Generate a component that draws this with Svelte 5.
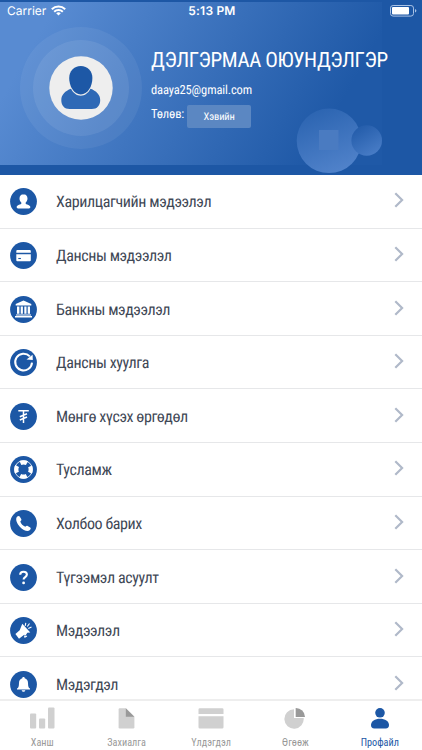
<script>
const rows = [
	{ icon: "user", label: "Харилцагчийн мэдээлэл" },
	{ icon: "card", label: "Дансны мэдээлэл" },
	{ icon: "bank", label: "Банкны мэдээлэл" },
	{ icon: "refresh", label: "Дансны хуулга" },
	{ icon: "tugrik", label: "Мөнгө хүсэх өргөдөл" },
	{ icon: "help", label: "Тусламж" },
	{ icon: "phone", label: "Холбоо барих" },
	{ icon: "question", label: "Түгээмэл асуулт" },
	{ icon: "news", label: "Мэдээлэл" },
	{ icon: "bell", label: "Мэдэгдэл" },
];

const tabs = [
	{ icon: "bars", label: "Ханш" },
	{ icon: "file", label: "Захиалга" },
	{ icon: "wallet", label: "Үлдэгдэл" },
	{ icon: "pie", label: "Өгөөж" },
	{ icon: "profile", label: "Профайл" },
];

let active = $state("profile");
</script>

<div class="screen">
	<header>
		<div class="panel"></div>
		<svg class="bubbles" viewBox="0 0 90 70" width="90" height="70">
			<defs>
				<linearGradient id="big" x1="0.2" y1="0" x2="0.6" y2="1">
					<stop offset="0" stop-color="#2a63b0" />
					<stop offset="1" stop-color="#5082ca" />
				</linearGradient>
				<linearGradient id="small" x1="0.2" y1="0" x2="0.8" y2="1">
					<stop offset="0" stop-color="#225ba9" />
					<stop offset="1" stop-color="#4a7ec8" />
				</linearGradient>
			</defs>
			<circle cx="33" cy="35.8" r="32.3" fill="url(#big)" />
			<rect x="23" y="25" width="19.500" height="20" fill="#4a7bc1" />
			<circle cx="70.700" cy="35.500" r="15.300" fill="url(#small)" />
		</svg>

		<div class="status">
			<div class="carrier">
				<span>Carrier</span>
				<svg width="15" height="11" viewBox="0 0 15 11" fill="none" stroke="#fff" stroke-width="2">
					<path d="M.8 4.2a9.6 9.6 0 0 1 13.4 0M3.2 6.7a6.2 6.2 0 0 1 8.6 0" />
					<path d="M7.5 10.6 5.2 8.3a3.3 3.3 0 0 1 4.6 0z" fill="#fff" stroke="none" />
				</svg>
			</div>
			<span class="clock">5:13 PM</span>
			<svg class="battery" width="27" height="12" viewBox="0 0 27 12">
				<rect x=".5" y=".5" width="23" height="10.6" rx="2.6" fill="none" stroke="#a9c2e5" />
				<rect x="2" y="2" width="17" height="7.6" rx="1" fill="#fff" />
				<path d="M25 4v3.6q1.4-.5 1.4-1.8T25 4z" fill="#a9c2e5" />
			</svg>
		</div>

		<div class="account">
			<div class="avatar">
				<div class="ring">
					<svg width="64" height="64" viewBox="0 0 64 64">
						<circle cx="32" cy="32" r="31.7" fill="#eee" />
						<path d="M22 32.8c-5.7 2-9.7 6.2-9.7 11.2 0 5.6 3 9 8.4 9h22.1c5.4 0 8.4-3.4 8.4-9 0-5-4-9.2-9.7-11.2-2.2 4.4-5.7 6.9-9.7 6.900s-7.600-2.500-9.800-6.900z" fill="#2e69b6" />
						<path d="M31.8 10c-6.9 0-11.6 5.3-11.6 12 0 8.4 4.7 16.4 11.6 16.4S43.4 30.4 43.400 22c0-6.700-4.700-12-11.600-12z" fill="#1d58a6" />
					</svg>
				</div>
			</div>
			<div class="info">
				<h1>ДЭЛГЭРМАА ОЮУНДЭЛГЭР</h1>
				<p class="email">daaya25@gmail.com</p>
				<p class="state"><span>Төлөв:</span><span class="badge">Хэвийн</span></p>
			</div>
		</div>
	</header>

	<main>
		{#each rows as row}
			<div class="row">
				<svg class="icon" width="27" height="27" viewBox="0 0 27 27" fill="#fff">
					<circle cx="13.5" cy="13.5" r="13.4" fill="#1c57a5" />
					{#if row.icon === "user"}
						<path d="M13.5 6.300c-2.500 0-4 1.800-4 4.100 0 1.700.7 3.200 1.800 4.200v1.100c0 .6-4.600 1-4.600 3.400 0 1 .5 1.300 1.300 1.300h11c.8 0 1.300-.3 1.300-1.300 0-2.400-4.600-2.800-4.600-3.400v-1.100c1.100-1 1.800-2.500 1.800-4.200 0-2.300-1.500-4.100-4-4.100z" />
					{:else if row.icon === "card"}
						<path d="M7.300 7.900h12.500q1 0 1 1v1.800H6.300V8.900q0-1 1-1zM6.300 12.300h14.500v6q0 1-1 1H7.300q-1 0-1-1z" />
						<path d="M8.300 16.500h2.600" stroke="#1c57a5" stroke-width="1.1" />
					{:else if row.icon === "bank"}
						<path d="M13.500 4.500 21.300 8v1.500H5.700V8zM7 10.500h2.400v7.300H7zM10.700 10.500h2.200v7.300h-2.200zM14.300 10.500h2.200v7.300h-2.200zM17.700 10.500H20v7.300h-2.300zM6 18.400h15v1H6zM5 20h17v1.500H5z" />
					{:else if row.icon === "refresh"}
						<path d="M19.800 7.400A8.400 8.400 0 1 0 22 13.600" fill="none" stroke="#fff" stroke-width="2" />
						<path d="m22.600 5.800.2 5.200-6.300-.6z" />
					{:else if row.icon === "tugrik"}
						<path d="M8.300 7.700h10.500M13.500 7.700V20M9.800 13.700l7.200-3M9.800 17l7.200-3" fill="none" stroke="#fff" stroke-width="1.500" />
					{:else if row.icon === "help"}
						<circle cx="13.5" cy="13.5" r="7.200" fill="none" stroke="#fff" stroke-width="4.200" stroke-dasharray="6.800 4.510" stroke-dashoffset="3.400" />
						<circle cx="13.5" cy="13.5" r="8.900" fill="none" stroke="#fff" stroke-width=".8" />
					{:else if row.icon === "phone"}
						<path d="M6.800 7.100c1-1.200 2.200-1.400 2.900-.5l1.500 2.400c.5.900.2 1.500-.9 2.400.8 2.400 2.500 4.200 5 5.300.9-1 1.600-1.300 2.400-.8l2.500 1.700c.9.700.6 1.800-.6 2.700-2 1.500-6.300.1-9.600-3.300-3.300-3.300-4.700-7.800-3.200-9.900z" />
					{:else if row.icon === "question"}
						<path d="M10.200 10.700c0-2 1.300-3 3.300-3s3.400 1.100 3.400 2.800c0 2.600-3.300 2.500-3.300 5" fill="none" stroke="#fff" stroke-width="2.100" />
						<circle cx="13.600" cy="18.900" r="1.400" />
					{:else if row.icon === "news"}
						<path d="m12.300 6.700 8 8.700-3 .3-1.900 3.100-1.200-1-5.200 3.900-3.600-4.700 4.300-3.700z" />
						<path d="m15.200 8.900.6-3M17.300 9.500l2.200-3M18.300 11.400l3.200-1.500M14.500 18.600l.4 1.500 2-1.100" fill="none" stroke="#fff" stroke-width="1.100" />
					{:else}
						<path d="M13.500 6.100c.8 0 1.200.5 1.200 1.200 2.200.6 3.300 2.300 3.300 4.600 0 3.700.7 4.800 2 5.700v.8H7v-.8c1.300-.9 2-2 2-5.700 0-2.300 1.100-4 3.300-4.600 0-.7.400-1.200 1.200-1.200zM11.600 19.200h3.800q-.4 1.600-1.900 1.600t-1.900-1.600z" />
					{/if}
				</svg>
				<span class="label">{row.label}</span>
				<svg class="chevron" width="10" height="16" viewBox="0 0 10 16" fill="none" stroke="#b0b9c9" stroke-width="2.200">
					<path d="m1.300 1.200 6.800 6.800-6.800 6.800" />
				</svg>
			</div>
		{/each}
	</main>

	<nav>
		{#each tabs as tab}
			<button class:active={active === tab.icon} onclick={() => (active = tab.icon)}>
				<svg width="28" height="22" viewBox="0 0 28 22" fill="currentColor">
					{#if tab.icon === "bars"}
						<rect x="2" y="6.5" width="6.2" height="15" rx="1" />
						<rect x="11" y="11.5" width="6.2" height="10" rx="1" />
						<rect x="20" y=".5" width="6.5" height="21" rx="1" />
					{:else if tab.icon === "file"}
						<path d="M6.800 1.200h6l8.600 8.600v10.500q0 1.200-1.200 1.200H6.800q-1.200 0-1.200-1.200V2.400q0-1.200 1.200-1.200z" />
						<path d="M12.800 1.200v8.600h8.600z" fill="#999" />
					{:else if tab.icon === "wallet"}
						<path d="M2.800 1.300h22.400q1.300 0 1.300 1.300v4.500h-25V2.600q0-1.300 1.300-1.300zM1.500 9.200h25v11q0 1.300-1.300 1.300H2.800q-1.300 0-1.300-1.300z" />
					{:else if tab.icon === "pie"}
						<path d="M13 2.300V11h9.700A9.700 9.700 0 1 1 13 2.300z" />
						<path d="M14.700 1v8.900H24A9.100 9.100 0 0 0 14.700 1z" fill="#999" />
					{:else}
						<circle cx="14" cy="5.800" r="4.800" />
						<path d="M8.300 21.500q-3.300 0-3.300-3.400c0-4 4-6.400 9-6.400s9 2.400 9 6.400q0 3.400-3.300 3.400z" />
					{/if}
				</svg>
				<span>{tab.label}</span>
			</button>
		{/each}
	</nav>
</div>

<style>
	:global(body) {
		margin: 0;
		background: #fff;
	}

	.screen {
		display: flex;
		flex-direction: column;
		height: 750px;
		overflow: hidden;
		font-family: "Roboto Condensed", Roboto, sans-serif;
		font-stretch: 75%;
		text-rendering: geometricPrecision;
		color: #3f4856;
	}

	header {
		position: relative;
		flex: none;
		height: 175px;
		background: #1d57a5;
		color: #fff;
	}

	.panel {
		position: absolute;
		top: 2px;
		left: 0;
		width: 382px;
		height: 163px;
		background: linear-gradient(120deg, #588bd2 12%, #1f59a7 84%);
	}

	.bubbles {
		position: absolute;
		left: 296px;
		top: 105px;
	}

	.status {
		position: relative;
		display: flex;
		justify-content: space-between;
		align-items: center;
		height: 21px;
		padding: 0 5px 0 7px;
		font-family: Inter, sans-serif;
		font-stretch: normal;
		font-size: 12px;
	}

	.carrier {
		display: flex;
		align-items: center;
		gap: 5px;
		width: 150px;
	}

	.clock {
		font-weight: 600;
		letter-spacing: 0.2px;
	}

	.battery {
		margin-left: 123px;
	}

	.account {
		position: relative;
		display: flex;
		padding: 6px 0 0 20px;
	}

	.avatar {
		display: flex;
		align-items: center;
		justify-content: center;
		width: 122px;
		height: 122px;
		border-radius: 50%;
		background: rgba(255, 255, 255, 0.06);
	}

	.ring {
		display: flex;
		align-items: center;
		justify-content: center;
		width: 96px;
		height: 96px;
		border-radius: 50%;
		background: rgba(255, 255, 255, 0.08);
	}

	.info {
		padding: 21px 0 0 9px;
	}

	h1 {
		margin: 0;
		font-size: 21px;
		font-weight: 400;
		line-height: 26px;
		letter-spacing: -0.4px;
		white-space: nowrap;
	}

	p {
		margin: 0;
		font-size: 12.5px;
		letter-spacing: -0.13px;
	}

	.email {
		margin-top: 8px;
		line-height: 18px;
	}

	.state {
		display: flex;
		gap: 3px;
		margin-top: 5px;
		line-height: 20px;
	}

	.badge {
		width: 64px;
		height: 23px;
		border-radius: 2px;
		background: #5b87c2;
		font-size: 10.5px;
		line-height: 23px;
		text-align: center;
	}

	main {
		flex: 1;
		min-height: 0;
		overflow: hidden;
	}

	.row {
		display: flex;
		align-items: center;
		box-sizing: border-box;
		height: 53.6px;
		padding: 1.4px 18px 0 10px;
		border-bottom: 1px solid #e6e7e9;
	}

	.label {
		flex: 1;
		margin-left: 19px;
		font-size: 16px;
		letter-spacing: -0.4px;
	}

	.chevron {
		margin-top: -3px;
	}

	nav {
		display: flex;
		flex: none;
		box-sizing: border-box;
		height: 51px;
		border-top: 2px solid #eee;
		background: #fff;
	}

	button {
		display: flex;
		flex: 1;
		flex-direction: column;
		align-items: center;
		gap: 7px;
		padding: 6px 0 0;
		border: none;
		background: none;
		color: #d0d0d0;
		font: inherit;
		font-size: 10.2px;
		line-height: 14px;
	}

	button span {
		color: #999;
	}

	button.active,
	button.active span {
		color: #1c57a5;
	}
</style>
